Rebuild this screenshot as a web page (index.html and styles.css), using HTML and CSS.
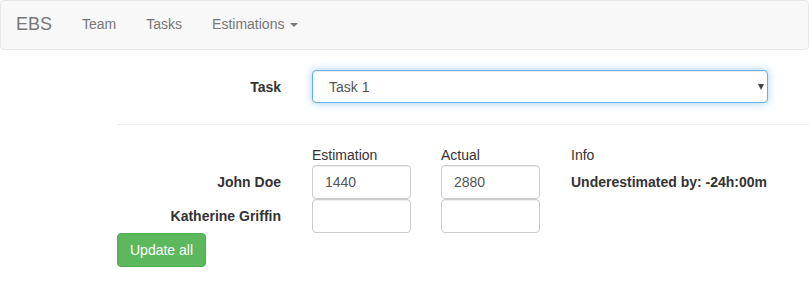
FILE: index.html
```html
<html lang="en">

<head>
<title>EBS</title>
<meta name="viewport" content="width=device-width, initial-scale=1">
<link rel="stylesheet" href="styles.css">
</head>

<body>

<div class="navbar">
  <a class="brand" href="#">EBS</a>
  <ul class="nav">
    <li><a href="#">Team</a></li>
    <li><a href="#">Tasks</a></li>
    <li><a href="#">Estimations <span class="caret"></span></a></li>
  </ul>
</div>

<div class="content">

  <div class="row task-row">
    <label class="label-col">Task</label>
    <div class="select-wrap">
      <select class="form-control focused">
        <option>Task 1</option>
        <option>Task 2</option>
      </select>
    </div>
  </div>

  <hr/>

  <div class="row head-row">
    <div class="label-col"></div>
    <div class="cell">Estimation</div>
    <div class="cell">Actual</div>
    <div class="info">Info</div>
  </div>

  <div class="row person">
    <label class="label-col">John Doe</label>
    <input class="form-control cell" type="text" value="1440">
    <input class="form-control cell" type="text" value="2880">
    <div class="info"><strong>Underestimated by: -24h:00m</strong></div>
  </div>

  <div class="row person">
    <label class="label-col">Katherine Griffin</label>
    <input class="form-control cell" type="text" value="">
    <input class="form-control cell" type="text" value="">
    <div class="info"></div>
  </div>

  <button class="btn-success">Update all</button>

</div>

</body>
</html>
```

FILE: styles.css
```css
body {
  margin: 0;
  font-family: "Liberation Sans", Arial, Helvetica, sans-serif;
  font-size: 14px;
  line-height: 20px;
  color: #333;
}

.navbar {
  display: flex;
  height: 48px;
  background-color: #f8f8f8;
  border: 1px solid #e7e7e7;
  border-radius: 4px;
  margin-bottom: 20px;
}

.brand {
  padding: 13px 15px;
  font-size: 18px;
  line-height: 20px;
  color: #777;
  text-decoration: none;
}

.nav {
  display: flex;
  list-style: none;
  margin: 0;
  padding: 0;
}

.nav a {
  display: block;
  padding: 13px 15px;
  color: #777;
  text-decoration: none;
}

.caret {
  display: inline-block;
  width: 0;
  height: 0;
  margin-left: 2px;
  vertical-align: middle;
  border-top: 4px solid;
  border-right: 4px solid transparent;
  border-left: 4px solid transparent;
}

.content {
  margin-left: 117px;
}

.row {
  display: flex;
  align-items: center;
}

.label-col {
  width: 164px;
  padding-right: 31px;
  text-align: right;
  font-weight: bold;
  flex-shrink: 0;
}

.form-control {
  box-sizing: border-box;
  height: 34px;
  padding: 6px 12px;
  font-family: inherit;
  font-size: 14px;
  line-height: 20px;
  color: #555;
  background-color: #fff;
  border: 1px solid #ccc;
  border-radius: 4px;
  box-shadow: inset 0 1px 1px rgba(0, 0, 0, .075);
  outline: none;
}

.select-wrap {
  position: relative;
  width: 456px;
}

.select-wrap select {
  display: block;
  width: 100%;
  height: 33px;
  padding-left: 16px;
  appearance: none;
  -webkit-appearance: none;
}

.select-wrap::after {
  content: "";
  position: absolute;
  right: 4px;
  top: 14px;
  border-top: 6px solid #444;
  border-left: 3px solid transparent;
  border-right: 3px solid transparent;
}

.focused {
  border-color: #66afe9;
  box-shadow: inset 0 1px 1px rgba(0, 0, 0, .075), 0 0 8px rgba(102, 175, 233, .6);
}

hr {
  margin: 21px 0 20px 0;
  border: 0;
  border-top: 1px solid #eee;
}

.cell {
  width: 99px;
  margin-right: 30px;
  flex-shrink: 0;
}

.info {
  padding-left: 1px;
}

.btn-success {
  height: 34px;
  padding: 6px 12px;
  font-family: inherit;
  font-size: 14px;
  line-height: 20px;
  color: #fff;
  background-color: #5cb85c;
  border: 1px solid #4cae4c;
  border-radius: 4px;
  cursor: pointer;
}
```
